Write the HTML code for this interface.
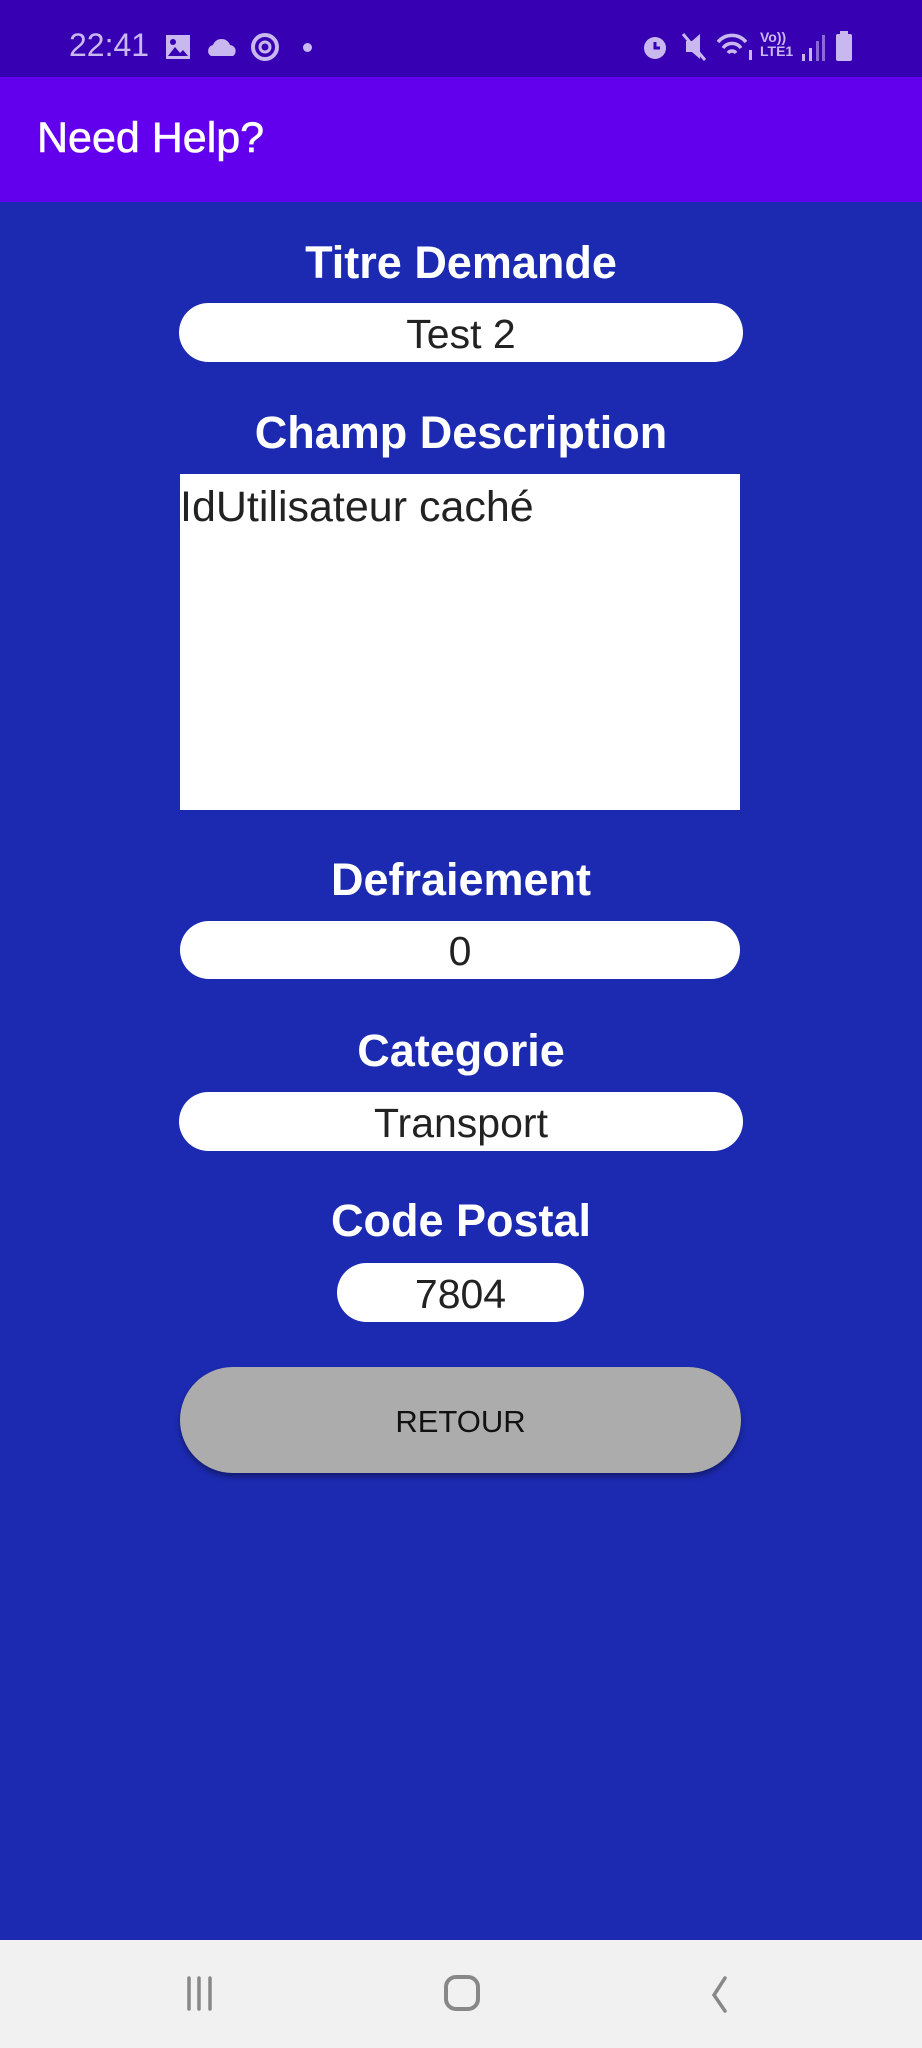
<!DOCTYPE html>
<html><head><meta charset="utf-8"><style>
*{margin:0;padding:0;box-sizing:border-box}
body{width:922px;height:2048px;background:#1c2ab1;font-family:"Liberation Sans",sans-serif;position:relative;overflow:hidden}
.sb{position:absolute;left:0;top:0;width:922px;height:77px;background:#3700b3;color:#c9b8f0}
.ab{position:absolute;left:0;top:77px;width:922px;height:125px;background:#6200ee}
.ab span{position:absolute;left:37px;top:37px;color:#fff;font-size:43px;-webkit-text-stroke:0.6px #fff}
.lbl{position:absolute;left:0;width:922px;text-align:center;color:#fff;font-weight:bold;font-size:45px;line-height:50px}
.fld{position:absolute;background:#fff;border-radius:30px;text-align:center;color:#222;font-size:41px}
.nav{position:absolute;left:0;top:1940px;width:922px;height:108px;background:#f1f1f1}
</style></head><body>
<div class="sb">
<span style="position:absolute;left:69px;top:27px;font-size:32px">22:41</span>
<svg style="position:absolute;left:165px;top:34px" width="26" height="26"><rect x="1" y="1" width="24" height="24" fill="#c9b8f0"/><path d="M3 22 L10 13 L15 19 L18 16 L23 22Z" fill="#3700b3"/><circle cx="8" cy="8" r="3" fill="#3700b3"/></svg>
<svg style="position:absolute;left:207px;top:36px" width="30" height="22"><path d="M4 20 A6 6 0 0 1 6 9 A9 9 0 0 1 23 9 A6 6 0 0 1 26 20Z" fill="#c9b8f0"/></svg>
<svg style="position:absolute;left:250px;top:31px" width="30" height="32"><circle cx="15" cy="16" r="12" fill="none" stroke="#c9b8f0" stroke-width="4"/><circle cx="15" cy="16" r="5" fill="none" stroke="#c9b8f0" stroke-width="3"/></svg>
<div style="position:absolute;left:303px;top:43px;width:9px;height:9px;border-radius:50%;background:#c9b8f0"></div>
<svg style="position:absolute;left:640px;top:31px" width="30" height="32"><circle cx="15" cy="17" r="11" fill="#c9b8f0"/><path d="M15 11 V17 H20" stroke="#3700b3" stroke-width="3" fill="none"/></svg>
<svg style="position:absolute;left:680px;top:31px" width="28" height="32"><path d="M6 10 H12 L20 3 V28 L12 21 H6Z" fill="#c9b8f0"/><path d="M3 3 L25 29" stroke="#c9b8f0" stroke-width="3"/></svg>
<svg style="position:absolute;left:716px;top:32px" width="40" height="30"><path d="M2 10 A18 18 0 0 1 30 10 M7 16 A11 11 0 0 1 25 16 M12 21 A5 5 0 0 1 20 21" stroke="#c9b8f0" stroke-width="3.5" fill="none"/><rect x="33" y="18" width="3" height="10" fill="#c9b8f0"/></svg>
<span style="position:absolute;left:760px;top:30px;font-size:14px;line-height:14px;font-weight:bold">Vo))<br>LTE1</span>
<svg style="position:absolute;left:800px;top:34px" width="26" height="28"><rect x="2" y="20" width="3" height="7" fill="#c9b8f0"/><rect x="9" y="14" width="3" height="13" fill="#c9b8f0"/><rect x="16" y="7" width="3" height="20" fill="#8a6ad8"/><rect x="22" y="1" width="3" height="26" fill="#8a6ad8"/></svg>
<svg style="position:absolute;left:834px;top:30px" width="20" height="32"><rect x="6" y="1" width="8" height="4" fill="#c9b8f0"/><rect x="2" y="4" width="16" height="27" rx="2" fill="#c9b8f0"/></svg>
</div>
<div class="ab"><span>Need Help?</span></div>

<div class="lbl" style="top:238px">Titre Demande</div>
<div class="fld" style="left:179px;top:303px;width:564px;height:59px;line-height:62px">Test 2</div>
<div class="lbl" style="top:408px">Champ Description</div>
<div style="position:absolute;left:180px;top:474px;width:560px;height:336px;background:#fff;color:#222;font-size:43px;line-height:66px">IdUtilisateur caché</div>
<div class="lbl" style="top:855px">Defraiement</div>
<div class="fld" style="left:180px;top:921px;width:560px;height:58px;line-height:61px">0</div>
<div class="lbl" style="top:1026px">Categorie</div>
<div class="fld" style="left:179px;top:1092px;width:564px;height:59px;line-height:62px">Transport</div>
<div class="lbl" style="top:1196px">Code Postal</div>
<div class="fld" style="left:337px;top:1263px;width:247px;height:59px;line-height:62px">7804</div>
<div style="position:absolute;left:180px;top:1367px;width:561px;height:106px;border-radius:53px;background:#acacac;box-shadow:0 4px 6px rgba(0,0,0,.35);text-align:center;line-height:110px;font-size:31px;color:#111">RETOUR</div>

<div class="nav">
<svg style="position:absolute;left:186px;top:36px" width="36" height="36"><path d="M3 2V33M13 2V33M24 2V33" stroke="#888" stroke-width="3.5" stroke-linecap="round"/></svg>
<svg style="position:absolute;left:443px;top:34px" width="40" height="40"><rect x="3" y="3" width="32" height="32" rx="10" fill="none" stroke="#888" stroke-width="4"/></svg>
<svg style="position:absolute;left:707px;top:36px" width="26" height="38"><path d="M18 2 L7 19 L18 35" stroke="#888" stroke-width="3.5" fill="none" stroke-linecap="round"/></svg>
</div>
</body></html>
